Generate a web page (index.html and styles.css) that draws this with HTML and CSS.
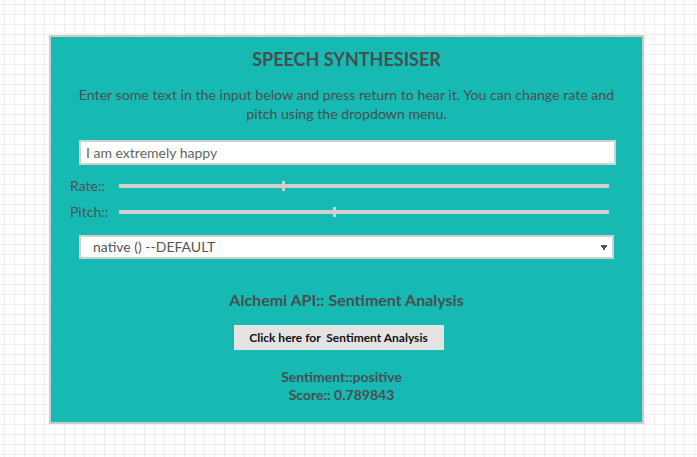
FILE: index.html
```html
<!DOCTYPE html>
<html>
<head>
<meta charset="utf-8">
<title>Speech Synthesiser</title>
<link rel="stylesheet" href="styles.css">
</head>
<body>
<div class="panel">
  <h1 class="title">SPEECH SYNTHESISER</h1>
  <p class="intro">Enter some text in the input below and press return to hear it. You can change rate and pitch using the dropdown menu.</p>
  <input class="txt" type="text" value="I am extremely happy">
  <div class="row row-first">
    <label class="lbl">Rate::</label>
    <input class="range" type="range" min="0" max="100" step="0.1" value="33.5">
  </div>
  <div class="row">
    <label class="lbl">Pitch::</label>
    <input class="range" type="range" min="0" max="100" step="0.1" value="44">
  </div>
  <div class="select">
    <span class="select-text">native () --DEFAULT</span>
    <svg class="arrow" width="6" height="5" viewBox="0 0 6 5"><path d="M0 0H6V2H5V3H4V5H2V3H1V2H0Z" fill="#555"/></svg>
  </div>
  <h2 class="api">Alchemi API:: Sentiment Analysis</h2>
  <button class="btn">Click here for&nbsp; Sentiment Analysis</button>
  <div class="result">
    <div>Sentiment::positive</div>
    <div>Score:: 0.789843</div>
  </div>
</div>
</body>
</html>
```
FILE: styles.css
```css
html, body {
  margin: 0;
  padding: 0;
}
body {
  width: 697px;
  height: 457px;
  overflow: hidden;
  font-family: Lato, "Open Sans", sans-serif;
  background-color: #fff;
  background-image:
    linear-gradient(to right, #efefef 1px, transparent 1px),
    linear-gradient(to bottom, #efefef 1px, transparent 1px);
  background-size: 10px 10px;
  background-position: 4px 4px;
}
.panel {
  box-sizing: border-box;
  width: 595px;
  height: 389px;
  margin: 35px 0 0 49px;
  border: 2px solid #cccccc;
  background: #17bab3;
  color: #474e50;
  text-align: center;
  padding: 12px 0 0 0;
  display: flex;
  flex-direction: column;
  align-items: center;
}
.title {
  margin: 0;
  font-size: 18px;
  font-weight: 700;
  line-height: 20px;
}
.intro {
  margin: 16px 0 0 0;
  padding: 0 24px;
  font-size: 14.15px;
  line-height: 19px;
}
.txt {
  box-sizing: border-box;
  margin: 17px 0 0 2px;
  width: 537px;
  height: 25px;
  border: 2px solid #d0d0d0;
  background: #fff;
  padding: 0 0 0 5px;
  font-family: Lato, sans-serif;
  font-size: 14px;
  color: #666;
  outline: none;
}
.row {
  align-self: stretch;
  display: flex;
  align-items: center;
  padding: 0 0 0 19px;
  height: 26px;
}
.row-first {
  margin-top: 7px;
}
.lbl {
  width: 49px;
  text-align: left;
  font-size: 14px;
  color: #4a5356;
}
.range {
  -webkit-appearance: none;
  appearance: none;
  width: 490px;
  height: 10px;
  margin: 2px 0 0 0;
  padding: 0;
  background: transparent;
}
.range::-webkit-slider-runnable-track {
  height: 4px;
  background: #d0d0d0;
}
.range::-webkit-slider-thumb {
  -webkit-appearance: none;
  width: 3px;
  height: 10px;
  margin-top: -3px;
  background: #d0d0d0;
  border: 0;
}
.select {
  box-sizing: border-box;
  margin: 11px 0 0 0;
  width: 535px;
  height: 24px;
  border: 2px solid #d0d0d0;
  background: #fff;
  display: flex;
  align-items: center;
  justify-content: space-between;
  padding: 0 5px 1px 12px;
}
.select-text {
  font-size: 14px;
  color: #555;
}
.arrow {
  display: block;
  margin-top: 2px;
}
.api {
  margin: 31px 0 0 0;
  font-size: 16px;
  font-weight: 700;
  line-height: 20px;
}
.btn {
  margin: 15px 16px 0 0;
  width: 210px;
  height: 25px;
  border: 0;
  background: #e3e3e3;
  font-family: Lato, sans-serif;
  font-size: 12px;
  font-weight: 700;
  color: #111;
  padding: 0;
}
.result {
  margin: 18px 10px 0 0;
  font-size: 14px;
  font-weight: 700;
  line-height: 18px;
}
```
